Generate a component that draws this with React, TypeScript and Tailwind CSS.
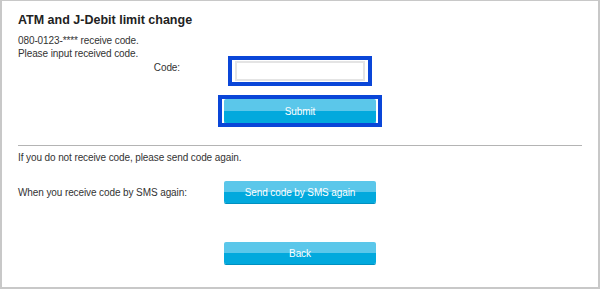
import React from "react";

const btn =
  "relative flex items-center justify-center w-[152px] rounded-[2px] text-white text-[10px] tracking-[-0.1px] bg-[linear-gradient(to_bottom,#5bc7ea_0%,#5bc7ea_50%,#02a9dd_50%,#02a9dd_100%)] shadow-[0_1px_0_#0090c0]";

export default function App() {
  return (
    <div className="w-[600px] h-[290px] bg-white">
      <div className="w-[600px] h-[289px] border-t border-b-2 border-x-2 border-[#c8c8c8] pl-[16px] pr-[16px] text-[#333] font-['Liberation_Sans',Arial,sans-serif] text-[10px] tracking-[-0.1px] leading-[13px]">
        <div className="mt-[10px] h-[18px] font-bold text-[12.5px] tracking-normal leading-[18px] text-[#222]">
          ATM and J-Debit limit change
        </div>
        <div className="mt-[5px]">080-0123-**** receive code.</div>
        <div className="mt-[0px]">Please input received code.</div>
        <div className="flex items-start mt-[1px]">
          <div className="w-[162px] text-right">Code:</div>
          <div className="relative ml-[55px] w-[130px] h-[20px]">
            <div className="w-full h-full border-2 border-[#e4e4e4] bg-white" />
            <div className="absolute -left-[7px] -right-[7px] -top-[5px] -bottom-[5px] border-[4px] border-[#0a46d8]" />
          </div>
        </div>
        <div className="relative ml-[206px] mt-[18px] w-[152px]">
          <div className={btn + " h-[24px]"}>Submit</div>
          <div className="absolute -left-[6px] -right-[6px] -top-[4px] -bottom-[4px] border-[4px] border-[#0a46d8]" />
        </div>
        <div className="mt-[22px] h-px bg-[#b4b4b4]" />
        <div className="mt-[5px]">If you do not receive code, please send code again.</div>
        <div className="flex items-center mt-[17px]">
          <div className="w-[206px]">When you receive code by SMS again:</div>
          <div className={btn + " h-[22px]"}>Send code by SMS again</div>
        </div>
        <div className={btn + " h-[22px] ml-[206px] mt-[39px]"}>Back</div>
      </div>
    </div>
  );
}
